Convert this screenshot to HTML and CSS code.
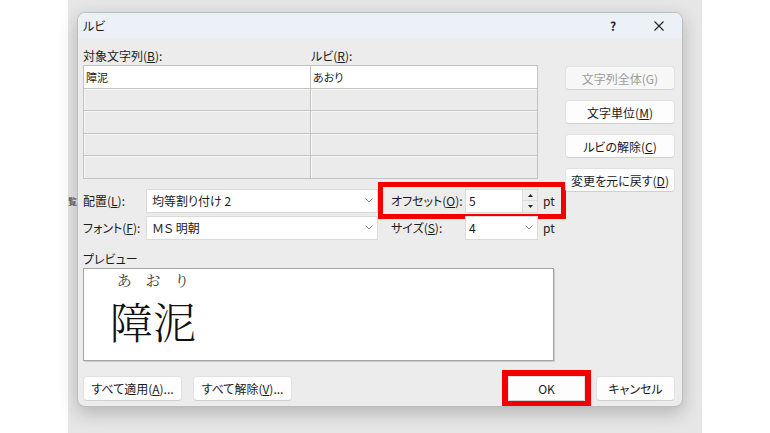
FILE: index.html
```html
<!DOCTYPE html>
<html lang="ja">
<head>
<meta charset="utf-8">
<title>ルビ</title>
<link rel="stylesheet" href="styles.css">
</head>
<body>
<div class="screen">
  <div class="backdrop">
    <div class="gutter"><span class="doc-char">覧</span></div>
    <div class="dialog">
      <div class="titlebar">
        <span class="title">ルビ</span>
        <span class="tb-btn help">?</span>
        <span class="tb-btn close"><svg width="10" height="10" viewBox="0 0 10 10"><path d="M0.5 0.5 L9.5 9.5 M9.5 0.5 L0.5 9.5" stroke="#202020" stroke-width="1.1" fill="none"/></svg></span>
      </div>
      <div class="content">
        <div class="main">
          <div class="left">
            <div class="col-labels">
              <span class="col-label first">対象文字列(<u>B</u>):</span>
              <span class="col-label">ルビ(<u>R</u>):</span>
            </div>
            <table class="grid">
              <tr class="active"><td>障泥</td><td>あおり</td></tr>
              <tr><td></td><td></td></tr>
              <tr><td></td><td></td></tr>
              <tr><td></td><td></td></tr>
              <tr><td></td><td></td></tr>
            </table>
            <div class="fields">
              <span class="f-label">配置(<u>L</u>):</span>
              <div class="select"><span class="sel-text">均等割り付け 2</span><span class="chev"><svg width="8" height="5" viewBox="0 0 8 5"><polyline points="0.5,0.5 4,4 7.5,0.5" stroke="#8a8a8a" fill="none" stroke-width="1"/></svg></span></div>
              <div class="group offset">
                <span class="g-label">オフセット(<u>O</u>):</span>
                <div class="num-input"><span class="num-text">5</span><span class="spin"><span class="spin-btn"><svg width="5" height="3" viewBox="0 0 5 3"><polygon points="0,3 2.5,0 5,3" fill="#222"/></svg></span><span class="spin-btn"><svg width="5" height="3" viewBox="0 0 5 3"><polygon points="0,0 5,0 2.5,3" fill="#222"/></svg></span></span></div>
                <span class="unit">pt</span>
                <span class="annot"></span>
              </div>
              <span class="f-label">フォント(<u>F</u>):</span>
              <div class="select"><span class="sel-text">ＭＳ 明朝</span><span class="chev"><svg width="8" height="5" viewBox="0 0 8 5"><polyline points="0.5,0.5 4,4 7.5,0.5" stroke="#8a8a8a" fill="none" stroke-width="1"/></svg></span></div>
              <div class="group">
                <span class="g-label">サイズ(<u>S</u>):</span>
                <div class="num-input"><span class="num-text">4</span><span class="chev small"><svg width="8" height="5" viewBox="0 0 8 5"><polyline points="0.5,0.5 4,4 7.5,0.5" stroke="#8a8a8a" fill="none" stroke-width="1"/></svg></span></div>
                <span class="unit">pt</span>
              </div>
            </div>
            <div class="preview-label">プレビュー</div>
            <div class="preview">
              <div class="ruby-block">
                <div class="ruby-line"><span>あ</span><span>お</span><span>り</span></div>
                <div class="base-line">障泥</div>
              </div>
            </div>
          </div>
          <div class="side">
            <span class="btn disabled">文字列全体(G)</span>
            <span class="btn">文字単位(<u>M</u>)</span>
            <span class="btn">ルビの解除(<u>C</u>)</span>
            <span class="btn">変更を元に戻す(<u>D</u>)</span>
          </div>
        </div>
        <div class="bottom">
          <div class="btn-group">
            <span class="btn wide">すべて適用(<u>A</u>)...</span>
            <span class="btn wide">すべて解除(<u>V</u>)...</span>
          </div>
          <div class="btn-group">
            <span class="btn ok">OK<span class="annot ok-annot"></span></span>
            <span class="btn cancel">キャンセル</span>
          </div>
        </div>
      </div>
    </div>
  </div>
</div>
</body>
</html>
```
FILE: styles.css
```css
* { box-sizing: border-box; }
html, body { margin: 0; padding: 0; }
body {
  font-family: "Noto Sans CJK JP", "Noto Sans", sans-serif;
  font-size: 12px;
  color: #1b1b1b;
  background: #ffffff;
  font-feature-settings: "palt" 1;
  white-space: nowrap;
}
u { text-decoration: underline; text-underline-offset: 1px; text-decoration-thickness: 1px; }
.screen {
  width: 770px;
  height: 433px;
  overflow: hidden;
  background: #ffffff;
  display: flex;
}
.backdrop {
  margin-left: 68px;
  width: 634px;
  height: 433px;
  background: #e6e6e6;
  display: flex;
  padding-top: 12px;
}
.gutter {
  width: 9px;
  flex: none;
  padding-top: 184px;
}
.doc-char {
  display: block;
  font-size: 9px;
  line-height: 12px;
  color: #444;
}
.dialog {
  position: relative;
  width: 606px;
  height: 395px;
  flex: none;
  background: #ececec;
  border: 1px solid #bdbdbd;
  border-radius: 8px;
  box-shadow: 0 6px 18px rgba(0,0,0,0.22);
  overflow: hidden;
  display: flex;
  flex-direction: column;
}
.titlebar {
  height: 25px;
  flex: none;
  background: #ecf0f7;
  display: flex;
  align-items: center;
  padding-left: 5px;
}
.title { flex: 1; font-size: 12px; }
.tb-btn {
  width: 46px;
  height: 25px;
  display: flex;
  align-items: center;
  justify-content: center;
}
.help { font-size: 12px; font-weight: 700; color: #222; }
.content {
  padding: 9px 7px 0 5px;
  display: flex;
  flex-direction: column;
}
.main {
  display: grid;
  grid-template-columns: 478px 110px;
  column-gap: 4px;
}
.left { display: flex; flex-direction: column; }
.col-labels { display: flex; height: 18px; line-height: 18px; }
.col-label.first { width: 228px; }
.grid {
  width: 454px;
  border-collapse: collapse;
  table-layout: fixed;
}
.grid td {
  width: 227px;
  height: 22.6px;
  padding: 0 2px;
  border: 1px solid #c3c3c3;
  background: #ebebeb;
  box-shadow: inset 1px 1px 0 #f8f8f8;
  font-size: 11px;
  line-height: 14px;
}
.grid tr.active td { background: #ffffff; box-shadow: none; }
.fields {
  margin-top: 10px;
  display: grid;
  grid-template-columns: 63px 232px 183px;
  grid-auto-rows: 24px;
  row-gap: 3px;
}
.f-label { display: flex; align-items: center; }
.select {
  background: #ffffff;
  border: 1px solid #dadada;
  display: flex;
  align-items: center;
  padding-left: 5px;
}
.sel-text { flex: 1; }
.chev {
  width: 16px;
  height: 100%;
  display: flex;
  align-items: center;
  justify-content: center;
}
.group {
  position: relative;
  display: flex;
  align-items: center;
  padding-left: 13px;
}
.g-label { width: 74px; }
.num-input {
  width: 73px;
  height: 100%;
  background: #ffffff;
  border: 1px solid #dadada;
  display: flex;
  align-items: center;
}
.num-text { flex: 1; padding-left: 3px; }
.spin {
  width: 15px;
  height: 100%;
  display: flex;
  flex-direction: column;
  background: #efefef;
  border-left: 1px solid #dcdcdc;
}
.spin-btn {
  flex: 1;
  display: flex;
  align-items: center;
  justify-content: center;
}
.spin-btn + .spin-btn { border-top: 1px solid #dcdcdc; }
.unit { margin-left: 5px; }
.annot {
  position: absolute;
  left: 0;
  right: -5px;
  top: -7px;
  bottom: -6px;
  border: 5px solid #f20000;
  pointer-events: none;
}
.preview-label {
  margin-top: 11px;
  height: 16px;
  line-height: 16px;
}
.preview {
  margin-top: 1px;
  width: 471px;
  height: 93px;
  background: #ffffff;
  border: 1px solid #a5a5a5;
  box-shadow: 1px 1px 0 #cccccc;
  padding-left: 26px;
}
.ruby-block { width: 86px; display: flex; flex-direction: column; }
.ruby-line {
  margin-top: 2px;
  display: flex;
  justify-content: space-around;
  font-family: "Noto Serif CJK JP", "Noto Sans CJK JP", serif;
  font-feature-settings: normal;
  font-size: 15px;
  line-height: 18px;
  color: #3a3a3a;
}
.base-line {
  margin-top: 9px;
  font-family: "Noto Serif CJK JP", "Noto Sans CJK JP", serif;
  font-feature-settings: normal;
  font-weight: 300;
  font-size: 43px;
  line-height: 46px;
  color: #111;
}
.side {
  display: flex;
  flex-direction: column;
  gap: 10px;
  padding-top: 19px;
}
.btn {
  position: relative;
  height: 24px;
  display: flex;
  align-items: center;
  justify-content: center;
  background: #fdfdfd;
  border: 1px solid #e1e1e1;
  border-bottom-color: #d0d0d0;
  border-radius: 4px;
}
.btn.disabled { color: #9d9d9d; background: #f7f7f7; }
.bottom {
  margin-top: 15px;
  display: flex;
  justify-content: space-between;
}
.btn-group { display: flex; gap: 11px; }
.btn.wide { width: 99px; height: 25px; }
.btn.ok { width: 77px; height: 25px; border-radius: 2px; }
.btn.cancel { width: 79px; height: 25px; }
.ok-annot { left: -7px; right: -7px; top: -7px; bottom: -7px; border-width: 6px; }
```
